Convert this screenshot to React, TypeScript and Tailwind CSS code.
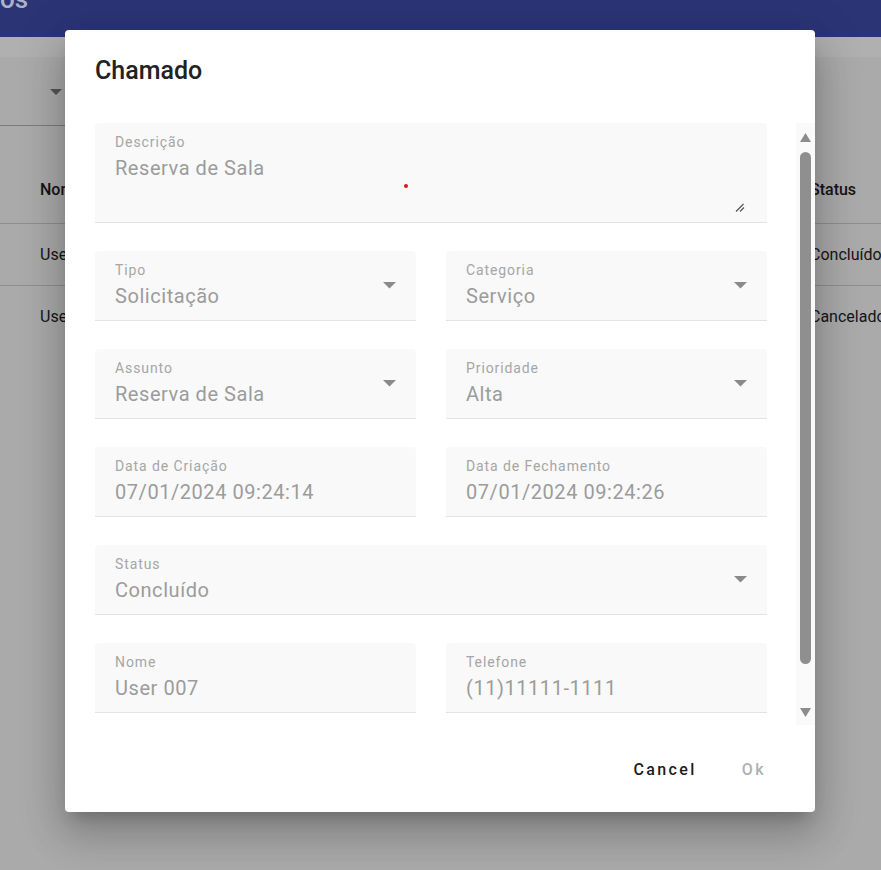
import { ReactNode } from "react";

const font = { fontFamily: "Roboto, 'Noto Sans', sans-serif" };

function Arrow() {
  return (
    <svg width="13" height="7" viewBox="0 0 13 7" className="shrink-0">
      <path d="M0 0 L13 0 L6.5 6.5 Z" fill="#8a8a8a" />
    </svg>
  );
}

function Field({
  label,
  value,
  select,
  wide,
  tall,
  children,
}: {
  label: string;
  value: string;
  select?: boolean;
  wide?: boolean;
  tall?: boolean;
  children?: ReactNode;
}) {
  return (
    <div
      className={`relative flex items-start rounded-t-[4px] border-b border-[#e3e3e3] bg-[#f9f9f9] pl-5 pr-5 pt-[11px] ${
        wide ? "col-span-2" : ""
      } ${tall ? "h-[100px]" : "h-[70px]"}`}
    >
      <div className="flex flex-1 flex-col">
        <span className="text-[14px] leading-4 tracking-[0.9px] text-[#a6a6a6]">{label}</span>
        <span className="mt-[6px] text-[20px] leading-6 tracking-[0.55px] text-[#9c9c9c]">{value}</span>
      </div>
      {select && (
        <div className="flex h-full items-center pb-[11px]">
          <Arrow />
        </div>
      )}
      {children}
    </div>
  );
}

export default function App() {
  return (
    <div className="relative h-screen w-full overflow-hidden bg-[#aaaaaa]" style={font}>
      {/* page behind the dialog */}
      <div className="h-[37px] overflow-hidden bg-[#2b3576]">
        <div className="-mt-[17px] text-[26px] font-medium leading-8 text-[#aeb2c8]">os</div>
      </div>
      <div className="h-[20px] bg-[#b0b0b0]" />
      <div className="flex h-[69px] w-[65px] items-start border-b border-[#7c7c7c]">
        <div className="ml-[50px] mt-[32px]">
          <svg width="12" height="6" viewBox="0 0 12 6">
            <path d="M0 0 L12 0 L6 6 Z" fill="#555555" />
          </svg>
        </div>
      </div>
      <div className="mt-[31px] flex h-[67px] items-center border-b border-[#8e8e8e] text-[16px] font-medium text-[#151515]">
        <span className="w-[810px] shrink-0 pl-[40px]">Nome</span>
        <span className="whitespace-nowrap">Status</span>
      </div>
      <div className="flex h-[62px] items-center border-b border-[#8e8e8e] text-[16px] text-[#151515]">
        <span className="w-[810px] shrink-0 pl-[40px]">User 007</span>
        <span className="whitespace-nowrap">Concluído</span>
      </div>
      <div className="flex h-[62px] items-center text-[16px] text-[#151515]">
        <span className="w-[810px] shrink-0 pl-[40px]">User 001</span>
        <span className="whitespace-nowrap">Cancelado</span>
      </div>

      {/* dialog */}
      <div className="absolute inset-0 flex items-start justify-start pl-[65px] pt-[30px]">
        <div className="flex h-[782px] w-[750px] flex-col rounded-[4px] bg-white shadow-[0_11px_15px_-7px_rgba(0,0,0,0.2),0_24px_38px_3px_rgba(0,0,0,0.14),0_9px_46px_8px_rgba(0,0,0,0.12)]">
          <h2 className="mb-[36px] pl-[30px] pt-[25px] text-[25px] font-medium leading-8 text-[#222222]">
            Chamado
          </h2>
          <div className="flex h-[602px]">
            <div className="flex-1 overflow-hidden pl-[30px] pr-[29px]">
              <div className="grid grid-cols-2 gap-x-[30px] gap-y-7">
                <Field label="Descrição" value="Reserva de Sala" wide tall>
                  <div className="absolute left-[309px] top-[61px] h-[4px] w-[4px] rounded-full bg-[#e0161b]" />
                  <svg
                    width="10"
                    height="9"
                    viewBox="0 0 10 9"
                    className="absolute bottom-[10px] right-[22px]"
                  >
                    <path d="M1 8.5 L8.5 1 M5 8.5 L9 4.5" stroke="#555555" strokeWidth="1.2" />
                  </svg>
                </Field>
                <Field label="Tipo" value="Solicitação" select />
                <Field label="Categoria" value="Serviço" select />
                <Field label="Assunto" value="Reserva de Sala" select />
                <Field label="Prioridade" value="Alta" select />
                <Field label="Data de Criação" value="07/01/2024 09:24:14" />
                <Field label="Data de Fechamento" value="07/01/2024 09:24:26" />
                <Field label="Status" value="Concluído" select wide />
                <Field label="Nome" value="User 007" />
                <Field label="Telefone" value="(11)11111-1111" />
                <Field label="E-mail" value="user007@email.com" wide />
              </div>
            </div>
            <div className="flex w-[19px] flex-col items-center bg-[#fafafa] pb-[8px] pt-[10px]">
              <svg width="11" height="9" viewBox="0 0 11 9">
                <path d="M0 9 L11 9 L5.5 0 Z" fill="#8c8c8c" />
              </svg>
              <div className="mt-[10px] h-[512px] w-[11px] rounded-full bg-[#8f8f8f]" />
              <svg width="11" height="9" viewBox="0 0 11 9" className="mt-auto">
                <path d="M0 0 L11 0 L5.5 9 Z" fill="#8c8c8c" />
              </svg>
            </div>
          </div>
          <div className="flex flex-1 items-center justify-end gap-[45px] pr-[49px] pt-[3px] text-[16px] font-medium tracking-[2.4px]">
            <span className="text-[#1c1c1c]">Cancel</span>
            <span className="text-[#b0b0b0]">Ok</span>
          </div>
        </div>
      </div>
    </div>
  );
}
